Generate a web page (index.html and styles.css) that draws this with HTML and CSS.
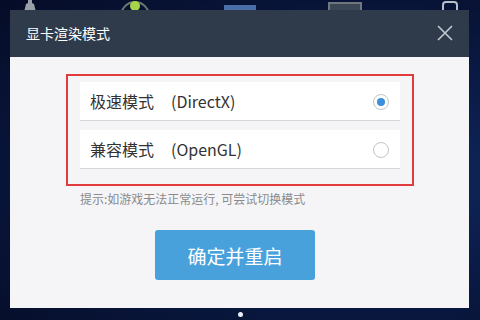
FILE: index.html
```html
<!DOCTYPE html>
<html lang="zh-CN">
<head>
    <meta charset="UTF-8">
    <title>显卡渲染模式</title>
    <link rel="stylesheet" href="styles.css">
</head>
<body>
    <div class="desktop-icons">
        <svg width="40" height="12" viewBox="0 0 40 12"><path d="M14 12 L16 4 L20 2 L24 4 L26 12 Z" fill="#9aa0a8"/><rect x="18" y="0" width="4" height="4" fill="#9aa0a8"/></svg>
        <svg width="40" height="12" viewBox="0 0 40 12"><circle cx="20" cy="16" r="14" fill="none" stroke="#6b7a70" stroke-width="2"/><circle cx="20" cy="6" r="5" fill="#a8d44a"/></svg>
        <svg width="40" height="12" viewBox="0 0 40 12"><rect x="4" y="5" width="32" height="7" fill="#4a6ea8"/></svg>
        <svg width="40" height="12" viewBox="0 0 40 12"><rect x="4" y="3" width="32" height="9" fill="#3b4656" stroke="#70777f" stroke-width="2"/></svg>
        <svg width="40" height="12" viewBox="0 0 40 12"><path d="M13 12 V5 Q13 2 16 2 H24 Q27 2 27 5 V12" fill="none" stroke="#b8bec6" stroke-width="2"/></svg>
    </div>

    <div class="dialog">
        <div class="dialog-header">
            <span class="dialog-title">显卡渲染模式</span>
            <svg class="close" width="16" height="16" viewBox="0 0 16 16">
                <path d="M1 1 L15 15 M15 1 L1 15" stroke="#c3c9d1" stroke-width="1.6"/>
            </svg>
        </div>
        <div class="dialog-body">
            <div class="mode-box">
                <div class="mode-row">
                    <span class="mode-name">极速模式</span><span class="mode-api">(DirectX)</span>
                    <span class="radio checked"></span>
                </div>
                <div class="mode-row">
                    <span class="mode-name">兼容模式</span><span class="mode-api">(OpenGL)</span>
                    <span class="radio"></span>
                </div>
            </div>
            <div class="hint">提示:如游戏无法正常运行, 可尝试切换模式</div>
            <button class="confirm">确定并重启</button>
        </div>
    </div>
    <div class="dot"></div>
</body>
</html>
```

FILE: styles.css
```css
body {
    margin: 0;
    width: 480px;
    height: 320px;
    overflow: hidden;
    position: relative;
    font-family: "Noto Sans CJK SC", "Microsoft YaHei", sans-serif;
    background: radial-gradient(ellipse at 75% 55%, #112a63 0%, #0a1a45 45%, #050c26 100%);
}
.desktop-icons {
    position: absolute;
    top: 0;
    left: 10px;
    width: 460px;
    display: flex;
    justify-content: space-between;
}
.dialog {
    position: relative;
    margin: 10px 0 0 10px;
    width: 459px;
    height: 298px;
    display: flex;
    flex-direction: column;
}
.dialog-header {
    height: 47px;
    background-color: #2f3a4b;
    display: flex;
    align-items: center;
    justify-content: space-between;
    padding: 0 16px;
}
.dialog-title {
    color: #ffffff;
    font-size: 14px;
    margin-top: -2px;
}
.close {
    margin-top: -1px;
}
.dialog-body {
    flex: 1;
    background-color: #f5f5f7;
    padding: 17px 0 0 56px;
}
.mode-box {
    width: 320px;
    height: 96px;
    border: 2px solid #e23b3e;
    padding: 6px 12px;
    display: flex;
    flex-direction: column;
    gap: 9px;
}
.mode-row {
    height: 38px;
    background-color: #ffffff;
    border-bottom: 1px solid #d6d6d8;
    display: flex;
    align-items: center;
    padding: 0 10px;
    font-size: 16px;
    color: #333333;
}
.mode-api {
    margin-left: 17px;
    flex: 1;
}
.radio {
    width: 14px;
    height: 14px;
    border: 1px solid #c4c4c6;
    border-radius: 50%;
    background-color: #ffffff;
    margin-right: 1px;
    margin-top: 2px;
    display: flex;
    align-items: center;
    justify-content: center;
}
.radio.checked::after {
    content: "";
    width: 8px;
    height: 8px;
    border-radius: 50%;
    background-color: #3d8fd9;
}
.hint {
    margin: 4px 0 0 14px;
    font-size: 12px;
    color: #8a8a8a;
}
.confirm {
    display: block;
    margin: 23px 0 0 89px;
    width: 160px;
    height: 50px;
    border: none;
    border-radius: 3px;
    background-color: #49a1dc;
    color: #ffffff;
    font-family: "Noto Sans CJK SC", sans-serif;
    font-size: 19px;
}
.dot {
    position: absolute;
    left: 238px;
    top: 312px;
    width: 5px;
    height: 5px;
    border-radius: 50%;
    background-color: #e8eef8;
}
```
